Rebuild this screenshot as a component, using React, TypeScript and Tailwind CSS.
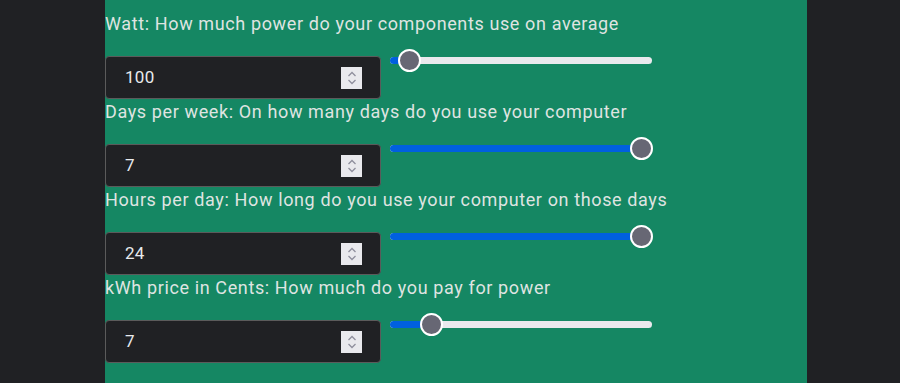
import React from "react";

type Row = { label: string; value: string; pos: number };

const rows: Row[] = [
  { label: "Watt: How much power do your components use on average", value: "100", pos: 19 },
  { label: "Days per week: On how many days do you use your computer", value: "7", pos: 251 },
  { label: "Hours per day: How long do you use your computer on those days", value: "24", pos: 251 },
  { label: "kWh price in Cents: How much do you pay for power", value: "7", pos: 41 },
];

function Spinner() {
  return (
    <div className="w-[21px] h-[22px] bg-[#e9e9ed] flex flex-col items-center justify-center gap-[2px]">
      <svg width="10" height="6" viewBox="0 0 10 6" fill="none">
        <path d="M1.5 5 L5 1.5 L8.5 5" stroke="#8f8f9d" strokeWidth="1.3" />
      </svg>
      <svg width="10" height="6" viewBox="0 0 10 6" fill="none">
        <path d="M1.5 1 L5 4.5 L8.5 1" stroke="#8f8f9d" strokeWidth="1.3" />
      </svg>
    </div>
  );
}

function Slider({ pos }: { pos: number }) {
  // pos = thumb centre in px from the left end of the track
  return (
    <div className="relative w-[262px] h-[24px] -mt-[8px] ml-[9px]">
      <div className="absolute left-0 right-0 top-[9px] h-[7px] rounded-full bg-[#e9e9ed]" />
      <div
        className="absolute left-0 top-[9px] h-[7px] rounded-full bg-[#0060df]"
        style={{ width: pos }}
      />
      <div
        className="absolute top-[1px] w-[23px] h-[23px] -ml-[11.5px] rounded-full bg-[#676774] border-2 border-white"
        style={{ left: pos }}
      />
    </div>
  );
}

export default function App() {
  return (
    <div className="w-[900px] h-[383px] bg-[#202124] overflow-hidden" style={{ fontFamily: "Roboto, 'Noto Sans', sans-serif" }}>
      <div className="ml-[105px] w-[702px] h-full bg-[#158763] pt-[11px]">
        {rows.map((r) => (
          <div key={r.label} className="h-[88px]">
            <div className="h-[45px] text-[18px] leading-[26px] tracking-[0.62px] text-[#dfe4e1]">{r.label}</div>
            <div className="flex items-start">
              <div className="w-[276px] h-[43px] bg-[#202124] border border-[#5b5b5b] rounded-[4px] flex items-center justify-between pl-[19px] pr-[18px]">
                <span className="text-[17px] tracking-[0.3px] text-[#e8eaed]">{r.value}</span>
                <Spinner />
              </div>
              <Slider pos={r.pos} />
            </div>
          </div>
        ))}
      </div>
    </div>
  );
}
